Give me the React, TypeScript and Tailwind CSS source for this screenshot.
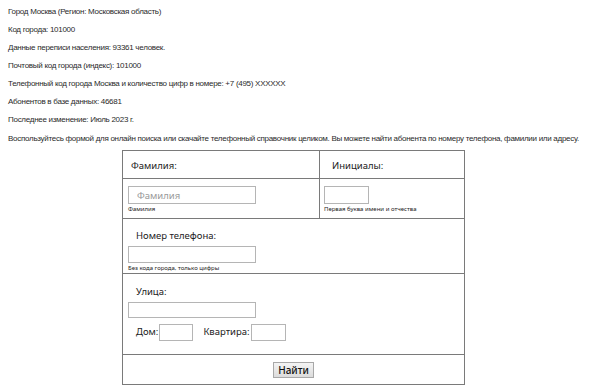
import React from "react";

const info = [
  "Город Москва (Регион: Московская область)",
  "Код города: 101000",
  "Данные переписи населения: 93361 человек.",
  "Почтовый код города (индекс): 101000",
  "Телефонный код города Москва и количество цифр в номере: +7 (495) XXXXXX",
  "Абонентов в базе данных: 46681",
  "Последнее изменение: Июль 2023 г.",
  "Воспользуйтесь формой для онлайн поиска или скачайте телефонный справочник целиком. Вы можете найти абонента по номеру телефона, фамилии или адресу.",
];

const inputCls = "border border-[#b5b5b5] bg-white px-2 text-[9.5px] text-[#333] placeholder:text-[#999] outline-none";

export default function App() {
  return (
    <div className="w-[587px] bg-white pt-[3px] font-['Liberation_Sans',Arial,sans-serif] text-[#2a2a2a]">
      <div className="flex flex-col px-2">
        {info.map((t, i) => (
          <p key={t} className={"h-[18px] text-[8px] leading-[18px] tracking-[-0.28px] whitespace-nowrap" + (i === 7 ? " mt-[1px]" : "")}>
            {t}
          </p>
        ))}
      </div>

      <div className="mx-auto mt-[2px] w-[343px] border border-[#7a7a7a] font-['Noto_Sans',sans-serif] text-[#222]">
        <div className="flex h-[28px] border-b border-[#7a7a7a]">
          <div className="flex w-[197px] items-center border-r border-[#7a7a7a] pl-2 pt-[3px] text-[9.5px]">Фамилия:</div>
          <div className="flex flex-1 items-center pl-3 pt-[3px] text-[9.5px]">Инициалы:</div>
        </div>
        <div className="flex h-[40px] border-b border-[#7a7a7a]">
          <div className="flex w-[197px] flex-col items-start border-r border-[#7a7a7a] pl-[5px] pt-[7px]">
            <input className={inputCls + " h-[18px] w-[128px]"} placeholder="Фамилия" />
            <span className="mt-[1px] text-[6px] leading-[8px]">Фамилия</span>
          </div>
          <div className="flex flex-1 flex-col items-start pl-[4px] pt-[7px]">
            <input className={inputCls + " h-[18px] w-[45px]"} />
            <span className="mt-[1px] text-[6px] leading-[8px]">Первая буква имени и отчества</span>
          </div>
        </div>
        <div className="flex h-[55px] flex-col items-start border-b border-[#7a7a7a] pl-[5px] pt-[10px]">
          <span className="ml-2 text-[9.5px] leading-[14px]">Номер телефона:</span>
          <input className={inputCls + " mt-[3px] h-[17px] w-[128px]"} />
          <span className="mt-[1px] text-[6px] leading-[8px]">Без кода города, только цифры</span>
        </div>
        <div className="flex h-[81px] flex-col items-start border-b border-[#7a7a7a] pl-[5px] pt-[11px]">
          <span className="ml-2 text-[9.5px] leading-[14px]">Улица:</span>
          <input className={inputCls + " mt-[3px] h-[16px] w-[128px]"} />
          <div className="mt-[6px] flex items-center text-[9.5px]">
            <span className="ml-[8px]">Дом:</span>
            <input className={inputCls + " ml-[1px] h-[17px] w-[34px]"} />
            <span className="ml-[10px]">Квартира:</span>
            <input className={inputCls + " ml-[1px] h-[17px] w-[35px]"} />
          </div>
        </div>
        <div className="flex h-[29px] items-center justify-center">
          <button className="h-[16px] w-[41px] border border-[#a8a8a8] bg-gradient-to-b from-[#f4f4f4] to-[#dcdcdc] text-[10px] font-medium leading-none text-[#111]">
            Найти
          </button>
        </div>
      </div>
    </div>
  );
}
